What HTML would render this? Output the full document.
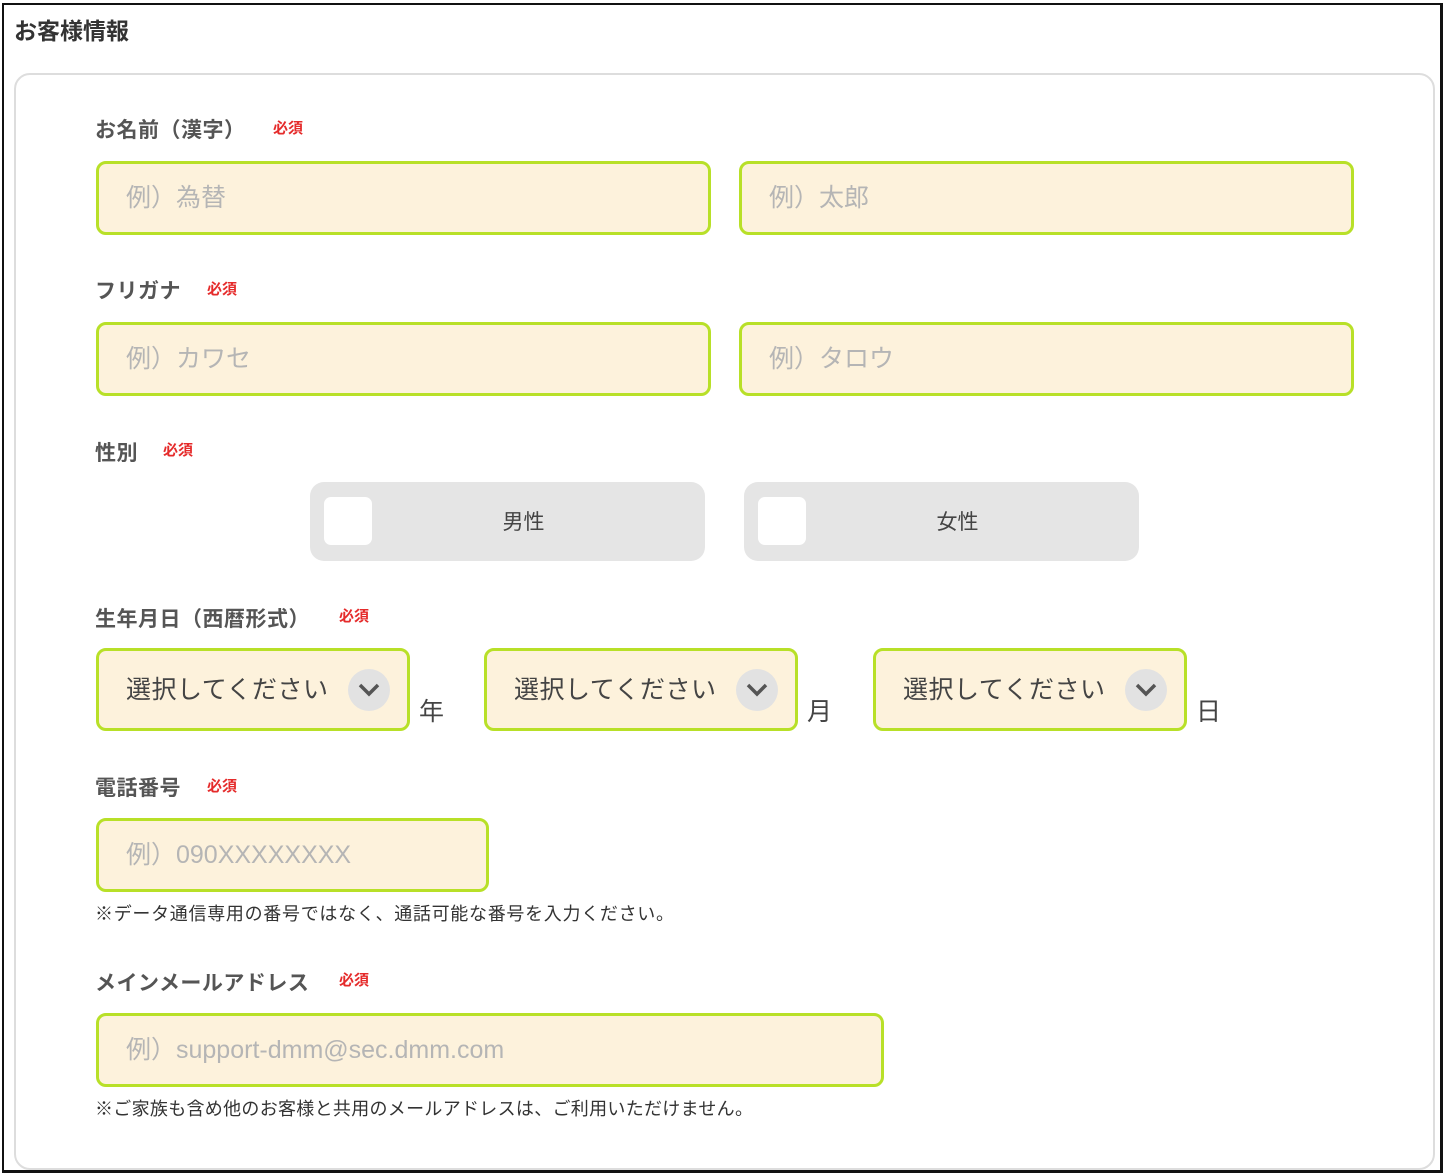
<!DOCTYPE html>
<html><head><meta charset="utf-8"><style>
*{box-sizing:border-box;margin:0;padding:0}
body{width:1446px;height:1176px;background:#fff;position:relative;overflow:hidden;font-family:"Liberation Sans","Noto Sans CJK JP",sans-serif;color:#444}
.a{position:absolute}
.outer{left:2px;top:3px;width:1441px;height:1170px;border:2px solid #111;border-right-width:3px;border-bottom-width:3px}
.card{left:14px;top:73px;width:1421px;height:1097px;border:2px solid #ddd;border-radius:16px}
.title{left:14px;top:12px;font-size:23px;font-weight:bold;color:#333}
.lbl{font-size:21px;font-weight:bold;color:#555;line-height:24px;letter-spacing:0.5px}
.req{font-size:15px;font-weight:bold;color:#e52b2b;line-height:18px}
.in{border:3px solid #b8e028;background:#fdf2dc;border-radius:10px;font-size:25px;color:#b5b5b5;padding-left:27px;padding-bottom:4px;display:flex;align-items:center}
.g{background:#e5e5e5;border-radius:14px;font-size:21px;color:#444;display:flex;align-items:center;justify-content:center;padding-left:32px;padding-bottom:2px}
.g i{position:absolute;left:14px;top:15px;width:48px;height:48px;background:#fff;border-radius:7px}
.sel{border:3px solid #b8e028;background:#fdf2dc;border-radius:10px;font-size:25px;color:#444;padding-left:27px;padding-bottom:3px;display:flex;align-items:center;letter-spacing:0.5px}
.sel b{position:absolute;right:17px;top:18px;width:42px;height:42px;border-radius:50%;background:#e2e2e2}
.sel b svg{position:absolute;left:9px;top:10px}
.unit{font-size:25px;color:#444}
.note{font-size:18px;color:#333}
</style></head><body>
<div class="a outer"></div>
<div class="a title">お客様情報</div>
<div class="a card"></div>

<div class="a lbl" style="left:95px;top:119px">お名前（漢字）</div>
<div class="a req" style="left:273px;top:120px">必須</div>
<div class="a in" style="left:96px;top:161px;width:615px;height:74px">例）為替</div>
<div class="a in" style="left:739px;top:161px;width:615px;height:74px">例）太郎</div>

<div class="a lbl" style="left:95px;top:280px">フリガナ</div>
<div class="a req" style="left:207px;top:281px">必須</div>
<div class="a in" style="left:96px;top:322px;width:615px;height:74px">例）カワセ</div>
<div class="a in" style="left:739px;top:322px;width:615px;height:74px">例）タロウ</div>

<div class="a lbl" style="left:95px;top:442px">性別</div>
<div class="a req" style="left:163px;top:442px">必須</div>
<div class="a g" style="left:310px;top:482px;width:395px;height:79px"><i></i>男性</div>
<div class="a g" style="left:744px;top:482px;width:395px;height:79px"><i></i>女性</div>

<div class="a lbl" style="left:95px;top:608px">生年月日（西暦形式）</div>
<div class="a req" style="left:339px;top:608px">必須</div>
<div class="a sel" style="left:96px;top:648px;width:314px;height:83px">選択してください<b><svg width="24" height="22" viewBox="0 0 24 22"><path d="M3 6 L12 15 L21 6" fill="none" stroke="#555" stroke-width="3.5"/></svg></b></div>
<div class="a unit" style="left:419px;top:692px">年</div>
<div class="a sel" style="left:484px;top:648px;width:314px;height:83px">選択してください<b><svg width="24" height="22" viewBox="0 0 24 22"><path d="M3 6 L12 15 L21 6" fill="none" stroke="#555" stroke-width="3.5"/></svg></b></div>
<div class="a unit" style="left:807px;top:692px">月</div>
<div class="a sel" style="left:873px;top:648px;width:314px;height:83px">選択してください<b><svg width="24" height="22" viewBox="0 0 24 22"><path d="M3 6 L12 15 L21 6" fill="none" stroke="#555" stroke-width="3.5"/></svg></b></div>
<div class="a unit" style="left:1196px;top:692px">日</div>

<div class="a lbl" style="left:95px;top:777px">電話番号</div>
<div class="a req" style="left:207px;top:778px">必須</div>
<div class="a in" style="left:96px;top:818px;width:393px;height:74px">例）090XXXXXXXX</div>
<div class="a note" style="left:95px;top:900px;letter-spacing:0.7px">※データ通信専用の番号ではなく、通話可能な番号を入力ください。</div>

<div class="a lbl" style="left:95px;top:972px">メインメールアドレス</div>
<div class="a req" style="left:339px;top:972px">必須</div>
<div class="a in" style="left:96px;top:1013px;width:788px;height:74px">例）support-dmm@sec.dmm.com</div>
<div class="a note" style="left:95px;top:1095px;letter-spacing:0.3px">※ご家族も含め他のお客様と共用のメールアドレスは、ご利用いただけません。</div>
</body></html>
